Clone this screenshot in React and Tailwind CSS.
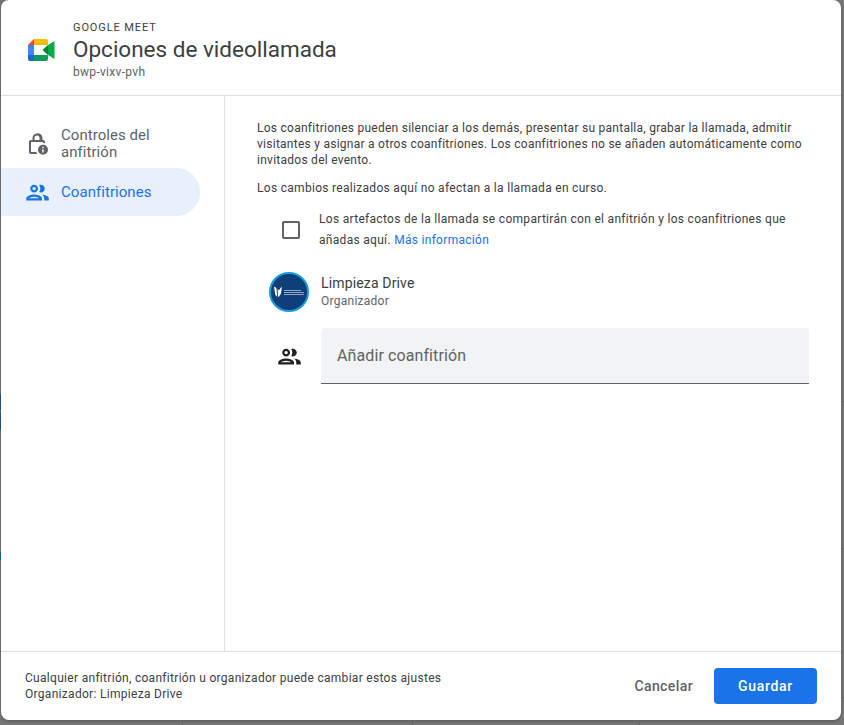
import React from 'react';

const FONT = { fontFamily: 'Roboto, sans-serif' };

function MeetLogo() {
  return (
    <svg width="28" height="24" viewBox="0 0 28 24">
      <path d="M7 1 L1 7 H7 Z" fill="#ea4335" />
      <path d="M7 1 H19 Q21 1 21 3 V7 H7 Z" fill="#fbbc04" />
      <path d="M1 7 H7 V17 H1 Z" fill="#4285f4" />
      <path d="M1 17 H7 V23 H3 Q1 23 1 21 Z" fill="#1967d2" />
      <path d="M7 17 H21 V21 Q21 23 19 23 H7 Z" fill="#0f9d58" />
      <path d="M21 7 L27.500 3 V21 L21 17 Z" fill="#00ac47" />
      <path d="M15.500 12 L21 7 V17 Z" fill="#00832d" />
    </svg>
  );
}

function LockIcon() {
  return (
    <svg width="24" height="24" viewBox="0 0 24 24" fill="#5f6368">
      <path d="M12 1.5A4.5 4.5 0 0 0 7.5 6v2H6a2 2 0 0 0-2 2v10a2 2 0 0 0 2 2h6.3a6.6 6.6 0 0 1-1-2H6V10h12v1.1a7 7 0 0 1 2 .2V10a2 2 0 0 0-2-2h-.5V6A4.5 4.5 0 0 0 12 1.5zm0 2A2.5 2.5 0 0 1 14.500 6v2h-5V6A2.500 2.500 0 0 1 12 3.500z" />
      <path fillRule="evenodd" d="M18 12.800a5 5 0 1 0 0 10 5 5 0 0 0 0-10zm-.7 2h1.400v1.400h-1.400zm0 2.400h1.400v3.400h-1.400z" />
    </svg>
  );
}

function PeopleIcon({ color }) {
  return (
    <svg width="27" height="27" viewBox="0 0 24 24" fill={color}>
      <path d="M9 13.750c-2.340 0-7 1.170-7 3.500V19h14v-1.750c0-2.330-4.660-3.500-7-3.500zM4.340 17c.84-.58 2.870-1.250 4.660-1.250s3.820.67 4.660 1.250H4.340zM9 12c1.930 0 3.500-1.570 3.500-3.500S10.930 5 9 5 5.500 6.570 5.500 8.500 7.070 12 9 12zm0-5c.83 0 1.500.67 1.500 1.500S9.830 10 9 10s-1.500-.67-1.500-1.500S8.170 7 9 7zm7.040 6.810c1.160.84 1.960 1.960 1.960 3.440V19h4v-1.750c0-2.020-3.500-3.170-5.960-3.440zM15 12c1.930 0 3.500-1.570 3.500-3.500S16.930 5 15 5c-.54 0-1.040.13-1.500.35.630.89 1 1.980 1 3.150s-.37 2.260-1 3.150c.46.220.96.350 1.500.35z" />
    </svg>
  );
}

function Avatar() {
  return (
    <div className="flex h-10 w-10 shrink-0 items-center gap-[2px] rounded-full border-2 border-[#1a9bdc] bg-[#0f3f78] pl-[3px]">
      <svg width="8" height="12" viewBox="0 0 10 14" fill="#ffffff" className="shrink-0">
        <path d="M0 0 L3 2 L4 13 Q1 11 1 7 Z" />
        <path d="M4.500 3 L6 5 L9.500 0 Q10 9 6 13 H5 Z" />
      </svg>
      <div className="flex flex-col gap-[1px]">
        <div className="h-[1px] w-[17px] bg-[#8fa8c8]" />
        <div className="h-[1px] w-[20px] bg-[#8fa8c8]" />
        <div className="h-[1px] w-[20px] bg-[#8fa8c8]" />
      </div>
    </div>
  );
}

export default function App() {
  return (
    <div className="flex h-[725px] w-[844px] flex-col overflow-hidden bg-[#757575]" style={FONT}>
      <div className="flex h-[720px] shrink-0">
        {/* calendar showing through the scrim, left edge */}
        <div className="flex w-[1px] shrink-0 flex-col">
          <div className="h-[394px]" />
          <div className="h-[16px] bg-[#1d5a96]" />
          <div className="h-[3px]" />
          <div className="h-[17px] bg-[#1d5a96]" />
          <div className="h-[122px]" />
          <div className="h-[8px] bg-[#1d6a96]" />
        </div>

        <div className="flex h-[720px] w-[840px] shrink-0 flex-col rounded-lg bg-white text-[#3c4043] shadow-[0_1px_3px_rgba(0,0,0,0.25)]">
          {/* header */}
          <div className="flex h-[96px] shrink-0 items-start border-b border-[#e0e0e0] pl-[26px]">
            <div className="mt-[38px]">
              <MeetLogo />
            </div>
            <div className="ml-[18px] pt-[21px]">
              <div className="text-[11px] leading-[13px] tracking-[0.9px] text-[#3c4043]">GOOGLE MEET</div>
              <div className="text-[22.5px] leading-[30px] text-[#3c4043]">Opciones de videollamada</div>
              <div className="text-xs leading-[16px] tracking-[0.3px] text-[#5f6368]">bwp-vixv-pvh</div>
            </div>
          </div>

          {/* body */}
          <div className="flex min-h-0 flex-1">
            <div className="w-[224px] shrink-0 border-r border-[#e0e0e0] pt-[24px]">
              <div className="flex h-[48px] w-[199px] items-center pl-[24px] text-[#5f6368]">
                <LockIcon />
                <span className="ml-[12px] text-[15px] leading-[17px] font-[450] tracking-[0.05px]">Controles del<br />anfitrión</span>
              </div>
              <div className="flex h-[48px] w-[199px] items-center rounded-r-full bg-[#e8f0fe] pl-[23px] text-[#1a73e8]">
                <PeopleIcon color="#1a73e8" />
                <span className="ml-[10px] text-[15px] font-[450] tracking-[0.05px]">Coanfitriones</span>
              </div>
            </div>

            <div className="min-w-0 flex-1 pt-[24px] pl-[32px] pr-[32px] text-xs tracking-[0.26px]">
              <p className="leading-[16px] text-[#3c4043]">
                Los coanfitriones pueden silenciar a los demás, presentar su pantalla, grabar la llamada, admitir visitantes y asignar a otros coanfitriones. Los coanfitriones no se añaden automáticamente como invitados del evento.
              </p>
              <p className="mt-[12px] leading-[16px] tracking-[0.3px]">Los cambios realizados aquí no afectan a la llamada en curso.</p>

              <div className="mt-[13px] flex items-center pl-[25px]">
                <div className="h-[18px] w-[18px] shrink-0 rounded-[2px] border-2 border-[#5f6368]" />
                <p className="ml-[19px] leading-[21px] tracking-[0.3px]">
                  Los artefactos de la llamada se compartirán con el anfitrión y los coanfitriones que añadas aquí. <a className="text-[#1a73e8]">Más información</a>
                </p>
              </div>

              <div className="mt-[21px] flex items-center pl-[12px]">
                <Avatar />
                <div className="ml-[12px]">
                  <div className="mb-[1px] text-sm leading-[17px] tracking-[0.15px] text-[#3c4043]">Limpieza Drive</div>
                  <div className="text-xs leading-[16px] text-[#5f6368]">Organizador</div>
                </div>
              </div>

              <div className="mt-[16px] flex items-center pl-[19px]">
                <PeopleIcon color="#202124" />
                <div className="ml-[18px] flex h-[56px] flex-1 items-center rounded-t border-b border-[#5f6368] bg-[#f1f3f4] pl-[16px] text-base tracking-[0.1px] text-[#5f6368]">
                  Añadir coanfitrión
                </div>
              </div>
            </div>
          </div>

          {/* footer */}
          <div className="flex h-[69px] shrink-0 items-center justify-between border-t border-[#e0e0e0] pl-[24px] pr-[24px]">
            <div className="text-xs leading-[16px] tracking-[0.3px] text-[#3c4043]">
              <div>Cualquier anfitrión, coanfitrión u organizador puede cambiar estos ajustes</div>
              <div>Organizador: Limpieza Drive</div>
            </div>
            <div className="flex items-center">
              <button className="mr-[21px] text-sm font-medium tracking-[0.4px] text-[#5f6368]">Cancelar</button>
              <button className="h-[36px] w-[103px] rounded bg-[#1a73e8] text-sm font-medium tracking-[0.7px] text-white">Guardar</button>
            </div>
          </div>
        </div>

        {/* grid ticks on the right edge */}
        <div className="flex w-[3px] shrink-0 flex-col">
          <div className="h-[401px]" />
          <div className="h-[1px] bg-[#686868]" />
          <div className="h-[146px]" />
          <div className="h-[1px] bg-[#686868]" />
          <div className="h-[148px]" />
          <div className="h-[1px] bg-[#686868]" />
        </div>
      </div>

      {/* grid lines below the dialog */}
      <div className="flex h-[5px] shrink-0">
        <div className="w-[183px] border-r border-[#636363]" />
        <div className="w-[230px] border-r border-[#636363]" />
        <div className="w-[227px] border-r border-[#636363]" />
      </div>
    </div>
  );
}
